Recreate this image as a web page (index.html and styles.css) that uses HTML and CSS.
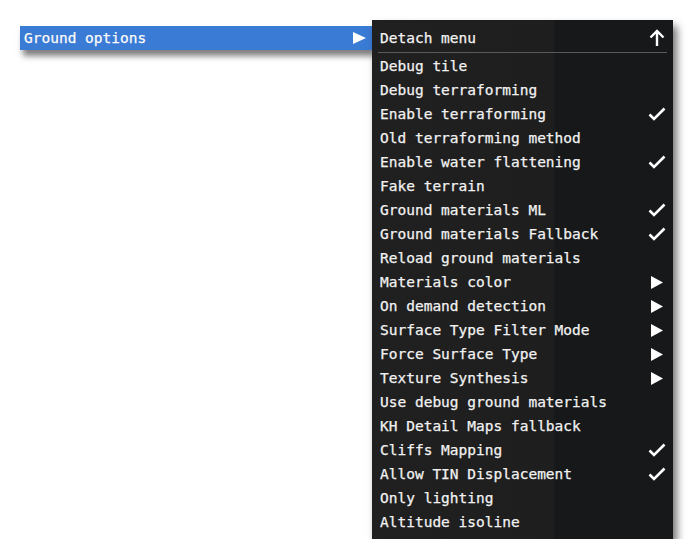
FILE: index.html
```html
<!DOCTYPE html>
<html>

<head>
    <meta charset="utf-8">
    <title>Ground options</title>
    <link rel="stylesheet" href="styles.css">
</head>

<body>
    <div class="stage">
        <div class="parent-item">
            <span>Ground options</span>
            <svg class="tri" width="13" height="12" viewBox="0 0 13 12"><polygon points="0,0 13,6 0,12" fill="#fff"/></svg>
        </div>

        <div class="menu">
            <div class="row head">
                <span>Detach menu</span>
                <svg class="ico" width="16" height="18" viewBox="0 0 16 18"><path d="M8 17V2M1.5 8.5L8 2l6.5 6.5" stroke="#fff" stroke-width="2.4" fill="none"/></svg>
            </div>
            <div class="sep"></div>
            <div class="row"><span>Debug tile</span></div>
            <div class="row"><span>Debug terraforming</span></div>
            <div class="row"><span>Enable terraforming</span><svg class="ico" width="18" height="14" viewBox="0 0 18 14"><path d="M1.5 7.5l4.5 4.5L16.5 1.5" stroke="#fff" stroke-width="2.6" fill="none"/></svg></div>
            <div class="row"><span>Old terraforming method</span></div>
            <div class="row"><span>Enable water flattening</span><svg class="ico" width="18" height="14" viewBox="0 0 18 14"><path d="M1.5 7.5l4.5 4.5L16.5 1.5" stroke="#fff" stroke-width="2.6" fill="none"/></svg></div>
            <div class="row"><span>Fake terrain</span></div>
            <div class="row"><span>Ground materials ML</span><svg class="ico" width="18" height="14" viewBox="0 0 18 14"><path d="M1.5 7.5l4.5 4.5L16.5 1.5" stroke="#fff" stroke-width="2.6" fill="none"/></svg></div>
            <div class="row"><span>Ground materials Fallback</span><svg class="ico" width="18" height="14" viewBox="0 0 18 14"><path d="M1.5 7.5l4.5 4.5L16.5 1.5" stroke="#fff" stroke-width="2.6" fill="none"/></svg></div>
            <div class="row"><span>Reload ground materials</span></div>
            <div class="row"><span>Materials color</span><svg class="ico tri" width="12" height="13" viewBox="0 0 12 13"><polygon points="0,0 12,6.5 0,13" fill="#fff"/></svg></div>
            <div class="row"><span>On demand detection</span><svg class="ico tri" width="12" height="13" viewBox="0 0 12 13"><polygon points="0,0 12,6.5 0,13" fill="#fff"/></svg></div>
            <div class="row"><span>Surface Type Filter Mode</span><svg class="ico tri" width="12" height="13" viewBox="0 0 12 13"><polygon points="0,0 12,6.5 0,13" fill="#fff"/></svg></div>
            <div class="row"><span>Force Surface Type</span><svg class="ico tri" width="12" height="13" viewBox="0 0 12 13"><polygon points="0,0 12,6.5 0,13" fill="#fff"/></svg></div>
            <div class="row"><span>Texture Synthesis</span><svg class="ico tri" width="12" height="13" viewBox="0 0 12 13"><polygon points="0,0 12,6.5 0,13" fill="#fff"/></svg></div>
            <div class="row"><span>Use debug ground materials</span></div>
            <div class="row"><span>KH Detail Maps fallback</span></div>
            <div class="row"><span>Cliffs Mapping</span><svg class="ico" width="18" height="14" viewBox="0 0 18 14"><path d="M1.5 7.5l4.5 4.5L16.5 1.5" stroke="#fff" stroke-width="2.6" fill="none"/></svg></div>
            <div class="row"><span>Allow TIN Displacement</span><svg class="ico" width="18" height="14" viewBox="0 0 18 14"><path d="M1.5 7.5l4.5 4.5L16.5 1.5" stroke="#fff" stroke-width="2.6" fill="none"/></svg></div>
            <div class="row"><span>Only lighting</span></div>
            <div class="row"><span>Altitude isoline</span></div>
        </div>
    </div>
</body>

</html>
```

FILE: styles.css
```css
/* 전체 */
body {
    margin: 0;
    background: #fff;
    font-family: "DejaVu Sans Mono", "Liberation Mono", monospace;
    font-size: 14.5px;
    color: #f2f2f2;
    -webkit-text-stroke: 0.25px #f2f2f2;
}

.stage {
    display: flex;
    align-items: flex-start;
    padding: 20px 0 0 20px;
}

/* 왼쪽 파란 항목 */
.parent-item {
    display: flex;
    align-items: center;
    justify-content: space-between;
    width: 352px;
    height: 24px;
    margin-top: 6px;
    padding: 0 6px 0 4px;
    box-sizing: border-box;
    background: #3a7bd5;
    box-shadow: 3px 6px 6px rgba(0, 0, 0, .5);
    color: #fff;
}

/* 어두운 메뉴 */
.menu {
    width: 301px;
    box-sizing: border-box;
    padding: 6px 0 5px 8px;
    background: linear-gradient(90deg, #202020 0%, #1e1e1e 60%, #16181a 61%, #16181a 100%);
    box-shadow: 4px 6px 8px rgba(0, 0, 0, .55);
}

.row {
    display: flex;
    align-items: center;
    justify-content: space-between;
    height: 24px;
    padding-right: 7px;
}

.row.head {
    padding-right: 8px;
}

.row .tri {
    margin-right: 3px;
}

.sep {
    height: 1px;
    margin: 2px 6px 1px -2px;
    background: #5a5a5a;
}
```
